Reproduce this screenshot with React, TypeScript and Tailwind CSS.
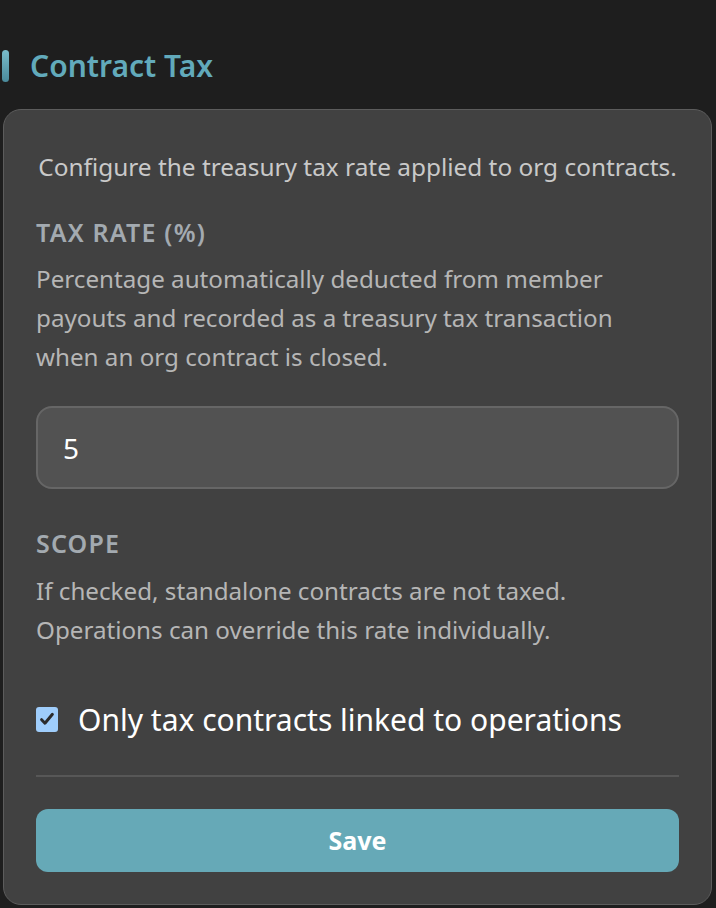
export default function App() {
  return (
    <div
      className="min-h-[908px] bg-[#1e1e1e] pl-[2px] pr-[4px] pt-[50px]"
      style={{ fontFamily: '"Noto Sans", "Open Sans", sans-serif' }}
    >
      <div className="flex h-[32px] items-center gap-[21px]">
        <div className="h-[32px] w-[7px] rounded-full bg-gradient-to-b from-[#79bccb] to-[#4a8a9b]" />
        <h1 className="text-[30px] font-semibold leading-none text-[#62aabb]">
          Contract Tax
        </h1>
      </div>

      <div className="ml-[1px] mt-[27px] rounded-[18px] border border-[#5c5c5c] bg-[#414141] px-[32px] pb-[32px] pt-[42px]">
        <p className="whitespace-nowrap text-center text-[24.4px] leading-[30px] text-[#c9c9c9]">
          Configure the treasury tax rate applied to org contracts.
        </p>

        <h3 className="mt-[35px] text-[25px] font-semibold uppercase leading-[30px] tracking-[1.2px] text-[#a3aab0]">
          Tax Rate (%)
        </h3>
        <p className="mt-[12px] pr-[20px] text-[24.2px] leading-[39px] text-[#b6b6b6]">
          Percentage automatically deducted from member payouts and recorded as
          a treasury tax transaction when an org contract is closed.
        </p>

        <input
          type="number"
          defaultValue={5}
          className="mt-[30px] block h-[83px] w-full rounded-[16px] border-2 border-[#666666] bg-[#525252] px-[25px] text-[28px] text-white outline-none"
        />

        <h3 className="mt-[39px] text-[25px] font-semibold uppercase leading-[30px] tracking-[1.2px] text-[#a3aab0]">
          Scope
        </h3>
        <p className="mt-[13px] text-[24.2px] leading-[39px] text-[#b6b6b6]">
          If checked, standalone contracts are not taxed. Operations can
          override this rate individually.
        </p>

        <label className="mt-[50px] flex h-[40px] items-center gap-[20px]">
          <span className="flex h-[25px] w-[22px] items-center justify-center rounded-[3px] bg-[#9fcdfb]">
            <svg viewBox="0 0 16 16" className="h-[18px] w-[18px]">
              <path
                d="M3.2 8.6l3 3.2L12.8 3.8"
                fill="none"
                stroke="#2b2b2b"
                strokeWidth="2.6"
                strokeLinecap="round"
                strokeLinejoin="round"
              />
            </svg>
          </span>
          <span className="text-[30px] text-white">
            Only tax contracts linked to operations
          </span>
        </label>

        <div className="mt-[36px] border-t-2 border-[#575757]" />

        <button className="mt-[32px] block h-[63px] w-full rounded-[12px] bg-[#66a9b7] text-[25px] font-bold text-white">
          Save
        </button>
      </div>
    </div>
  );
}
